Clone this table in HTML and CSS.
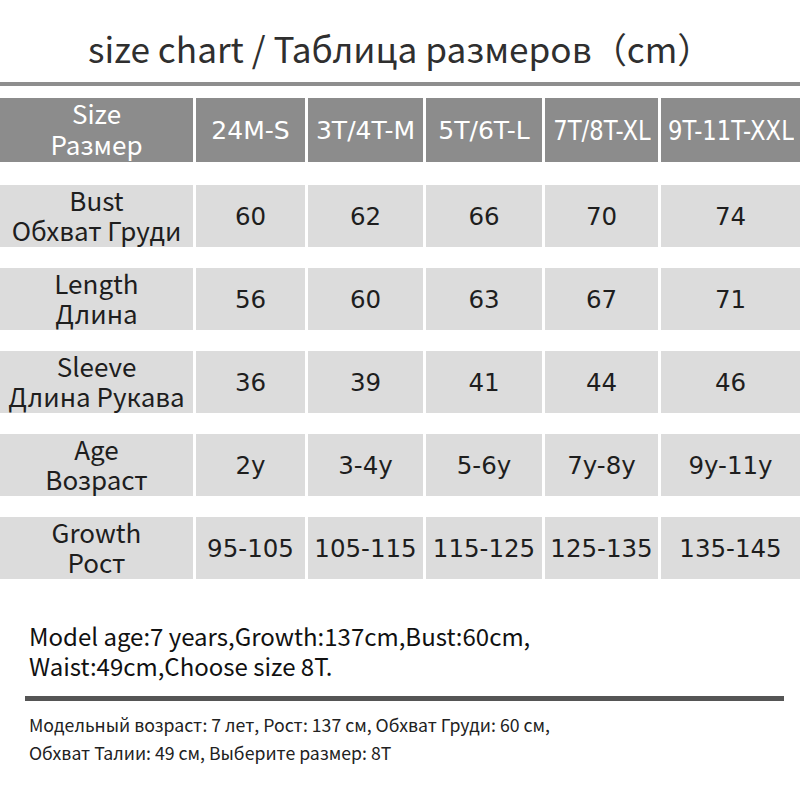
FILE: index.html
```html
<!DOCTYPE html>
<html lang="ru">
<head>
<meta charset="utf-8">
<title>size chart</title>
<link rel="stylesheet" href="styles.css">
</head>
<body>
<div class="page">
  <h1 class="title">size chart / Таблица размеров（cm）</h1>
  <div class="rule-top"></div>
  <div class="chart">
    <div class="cell head label"><span>Size</span><span>Размер</span></div>
    <div class="cell head num">24M-S</div>
    <div class="cell head num">3T/4T-M</div>
    <div class="cell head num">5T/6T-L</div>
    <div class="cell head num"><span class="cond">7T/8T-XL</span></div>
    <div class="cell head num"><span class="cond">9T-11T-XXL</span></div>

    <div class="cell label"><span>Bust</span><span>Обхват Груди</span></div>
    <div class="cell num">60</div>
    <div class="cell num">62</div>
    <div class="cell num">66</div>
    <div class="cell num">70</div>
    <div class="cell num">74</div>

    <div class="cell label"><span>Length</span><span>Длина</span></div>
    <div class="cell num">56</div>
    <div class="cell num">60</div>
    <div class="cell num">63</div>
    <div class="cell num">67</div>
    <div class="cell num">71</div>

    <div class="cell label"><span>Sleeve</span><span>Длина Рукава</span></div>
    <div class="cell num">36</div>
    <div class="cell num">39</div>
    <div class="cell num">41</div>
    <div class="cell num">44</div>
    <div class="cell num">46</div>

    <div class="cell label"><span>Age</span><span>Возраст</span></div>
    <div class="cell num">2y</div>
    <div class="cell num">3-4y</div>
    <div class="cell num">5-6y</div>
    <div class="cell num">7y-8y</div>
    <div class="cell num">9y-11y</div>

    <div class="cell label"><span>Growth</span><span>Рост</span></div>
    <div class="cell num">95-105</div>
    <div class="cell num">105-115</div>
    <div class="cell num">115-125</div>
    <div class="cell num">125-135</div>
    <div class="cell num">135-145</div>
  </div>
  <div class="notes">
    <p class="model">Model age:7 years,Growth:137cm,Bust:60cm,<br>Waist:49cm,Choose size 8T.</p>
    <div class="rule-dark"></div>
    <p class="model-ru">Модельный возраст: 7 лет, Рост: 137 см, Обхват Груди: 60 см,<br>Обхват Талии: 49 см, Выберите размер: 8T</p>
  </div>
</div>
</body>
</html>
```

FILE: styles.css
```css
html, body {
  margin: 0;
  padding: 0;
  background: #ffffff;
}

.page {
  width: 800px;
  height: 800px;
  overflow: hidden;
  font-family: "Noto Sans CJK SC", "Noto Sans", sans-serif;
}

.title {
  margin: 0;
  height: 82px;
  box-sizing: border-box;
  padding: 25px 0 0 88px;
  font-size: 35.2px;
  font-weight: 400;
  line-height: 46px;
  color: #2f2f2f;
  white-space: nowrap;
}

.rule-top {
  height: 4px;
  background: #8e8e8e;
}

.chart {
  margin-top: 12px;
  display: grid;
  grid-template-columns: 193px 109px 115px 116px 113px 139px;
  grid-template-rows: 66px repeat(5, 62px);
  column-gap: 3px;
  row-gap: 21px;
}

.cell {
  background: #dcdcdc;
  display: flex;
  align-items: center;
  justify-content: center;
  color: #1e1e1e;
  white-space: nowrap;
}

.cell.head {
  background: #8c8c8c;
  color: #ffffff;
  margin-bottom: 2px;
}

.label {
  flex-direction: column;
  font-size: 26px;
  line-height: 30px;
  font-weight: 400;
  padding-bottom: 3px;
  box-sizing: border-box;
}

.head.label {
  font-size: 26px;
  line-height: 31px;
  padding-bottom: 5px;
}

.num {
  font-family: "DejaVu Sans", "Liberation Sans", sans-serif;
  font-size: 24.5px;
}

.head.num {
  font-size: 25px;
}

.cond {
  display: inline-block;
  font-size: 27px;
  transform: scaleX(0.84);
}

.notes {
  padding: 42px 16px 0 25px;
}

.model {
  margin: 0 0 0 4px;
  font-size: 24px;
  line-height: 30px;
  color: #111;
  white-space: nowrap;
}

.rule-dark {
  margin-top: 15px;
  height: 5px;
  background: #555555;
}

.model-ru {
  margin: 9px 0 0 4px;
  font-size: 17.7px;
  line-height: 28px;
  color: #222;
  white-space: nowrap;
}
```
